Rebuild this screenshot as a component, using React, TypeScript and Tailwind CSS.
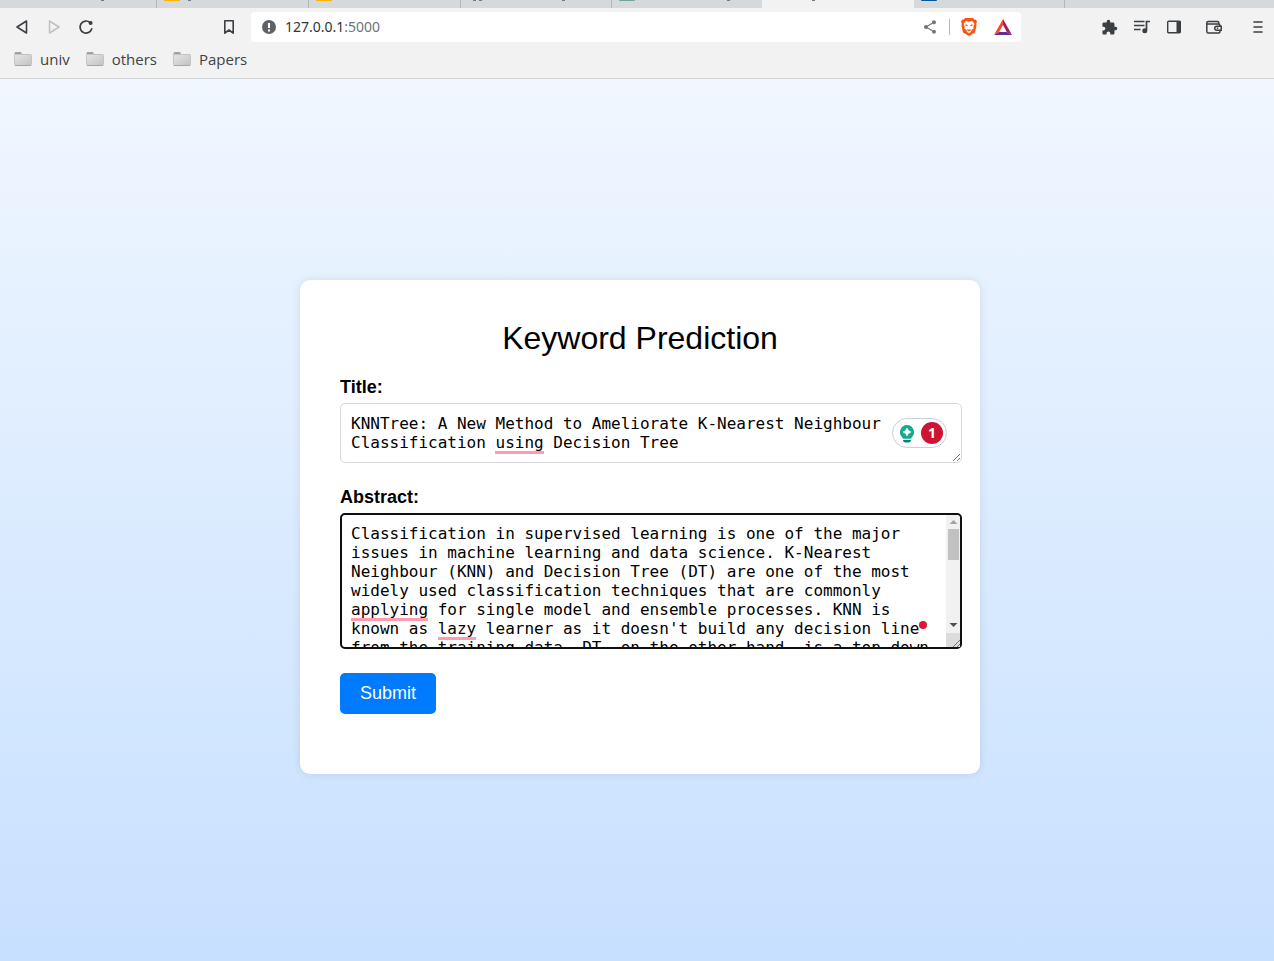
import React from "react";
import { MdShare, MdExtension } from "react-icons/md";

type Tab = { width: string; icon?: string; marks: number[] };

const tabs: Tab[] = [
  { width: "w-[157px] border-r", marks: [101] },
  { width: "w-[152px] border-r", icon: "#fbb300", marks: [31] },
  { width: "w-[152px] border-r", icon: "#fbb300", marks: [] },
  { width: "w-[151px] border-r", marks: [12, 18, 101] },
  { width: "w-[150px]", icon: "#71a697", marks: [115] },
  { width: "w-[152px] bg-[#f2f2f2]", marks: [50] },
  { width: "w-[151px] border-r", icon: "#005a96", marks: [] },
];

const abstractText =
  "Classification in supervised learning is one of the major issues in machine learning and data science. K-Nearest Neighbour (KNN) and Decision Tree (DT) are one of the most widely used classification techniques that are commonly applying for single model and ensemble processes. KNN is known as lazy learner as it doesn't build any decision line from the training data. DT, on the other hand, is a top-down approach that builds decision rules from the training data.";

function TabStrip() {
  return (
    <div className="flex h-2 bg-[#d5d9dc]" aria-hidden="true">
      {tabs.map((tab, i) => (
        <div key={i} className={`shrink-0 border-[#b4b8ba] ${tab.width}`}>
          <svg className="block h-2 w-full">
            {tab.marks.map((x) => (
              <rect key={x} x={x} y="0" width="3" height="1" fill="#77797b" />
            ))}
            {tab.icon && <rect x="7" y="-2" width="16" height="3" rx="1" fill={tab.icon} />}
          </svg>
        </div>
      ))}
    </div>
  );
}

function FolderIcon() {
  return (
    <svg width="18" height="16" viewBox="0 0 18 16" className="block">
      <defs>
        <linearGradient id="folder" x1="0" y1="0" x2="1" y2="1">
          <stop offset="0" stopColor="#e6e6e6" />
          <stop offset="1" stopColor="#c2c2c2" />
        </linearGradient>
      </defs>
      <path d="M0.5 4V2L1.5 1H7L8 3h9v2H.5z" fill="#a2a2a2" />
      <rect x="0.5" y="3.5" width="17" height="11" rx="1" fill="url(#folder)" stroke="#c4c4c4" />
      <path d="M1 14.5h16" stroke="#a6a6a6" />
    </svg>
  );
}

function Toolbar() {
  return (
    <div className="flex h-[38px] items-center text-[#3b3e42]">
      <div className="flex w-[251px] shrink-0 items-center">
        <button aria-label="Back" className="ml-3.5 flex size-4 items-center justify-center">
          <svg width="16" height="16" viewBox="0 0 16 16" fill="none" stroke="currentColor" strokeWidth="1.6" strokeLinejoin="round">
            <path d="M12.5 2v12L3 8z" />
          </svg>
        </button>
        <button aria-label="Forward" className="ml-4 flex size-4 items-center justify-center text-[#c0c2c4]">
          <svg width="16" height="16" viewBox="0 0 16 16" fill="none" stroke="currentColor" strokeWidth="1.6" strokeLinejoin="round">
            <path d="M3.5 2v12L13 8z" />
          </svg>
        </button>
        <button aria-label="Reload" className="ml-4 flex size-4 items-center justify-center">
          <svg width="16" height="16" viewBox="0 0 16 16" fill="none" stroke="currentColor" strokeWidth="1.7" strokeLinecap="round">
            <path d="M13.8 9.8A6 6 0 1 1 12 3.5" />
            <circle cx="12.6" cy="4" r="2" fill="currentColor" stroke="none" />
          </svg>
        </button>
        <button aria-label="Bookmark this page" className="ml-auto mr-3.5 flex size-4 items-center justify-center">
          <svg width="16" height="16" viewBox="0 0 16 16" fill="none" stroke="currentColor" strokeWidth="1.6" strokeLinejoin="round">
            <path d="M3.8 1.8h8.4v12.4L8 11l-4.200 3.200z" />
          </svg>
        </button>
      </div>
      <div className="flex h-[30px] w-[770px] shrink items-center rounded bg-white pl-2.5 pr-2">
        <svg width="16" height="16" viewBox="0 0 16 16" className="shrink-0">
          <circle cx="8" cy="8" r="7" fill="#5f6368" />
          <path d="M8 4v5M8 10.5v2" stroke="#fff" strokeWidth="2" />
        </svg>
        <div className="ml-2 font-['Noto_Sans',sans-serif] text-sm text-[#303336]">
          127.0.0.1<span className="text-[#707377]">:5000</span>
        </div>
        <button aria-label="Share" className="ml-auto text-[#757575]">
          <MdShare size={16} />
        </button>
        <div className="ml-[11px] h-4 w-px bg-[#b5b5b5]" />
        <button aria-label="Brave Shields" className="ml-2.5">
          <svg width="18" height="20" viewBox="0 0 18 20" className="block">
            <path d="M5 1h8l1.500 1.700 1.500-.2 1 2.500-.8 1.600.3 2L15 15.500 9 19l-6-3.500L1.500 8.600l.3-2L1 5l1-2.500 1.500.2z" fill="#fb5410" />
            <path d="M6 4l3 .7L12 4l2.500 2.700-1.200 3.300.4 1.600-2.300 1.500-.2 1.600L9 16.200l-2.200-1.500-.2-1.600-2.300-1.500.4-1.600-1.200-3.300z" fill="#fff" />
            <path d="M5.500 7.800l2 .8M12.500 7.800l-2 .8M7.300 12.600L9 13.500l1.700-.9" stroke="#fb5410" strokeWidth="1.3" fill="none" />
          </svg>
        </button>
        <button aria-label="Brave Rewards" className="ml-[15px]">
          <svg width="20" height="18" viewBox="0 0 20 18" className="block">
            <path d="M10 1L1 17l5.200-3L10 7z" fill="#ff4724" />
            <path d="M10 1l9 16-5.200-3L10 7z" fill="#9e1f63" />
            <path d="M1 17h18l-5.200-3H6.200z" fill="#662d91" />
          </svg>
        </button>
      </div>
      <div className="ml-auto flex items-center pr-2">
        <button aria-label="Extensions">
          <MdExtension size={17} />
        </button>
        <button aria-label="Media" className="ml-3.5">
          <svg width="20" height="20" viewBox="0 0 20 20" className="block">
            <path d="M2 4.500h10.500M2 8.500h10.500M2 12.500h6.500M14.500 13V4.500H18" fill="none" stroke="currentColor" strokeWidth="1.7" />
            <circle cx="12.8" cy="13.700" r="2.500" fill="currentColor" />
          </svg>
        </button>
        <button aria-label="Sidebar" className="ml-3.5">
          <svg width="16" height="16" viewBox="0 0 16 16" className="block">
            <rect x="1.700" y="2.200" width="12.600" height="11.600" rx="1" fill="none" stroke="currentColor" strokeWidth="1.4" />
            <path d="M10.500 2h4v12h-4z" fill="currentColor" />
          </svg>
        </button>
        <button aria-label="Wallet" className="ml-6">
          <svg width="16" height="16" viewBox="0 0 16 16" fill="none" stroke="currentColor" strokeWidth="1.5" className="block">
            <path d="M12.800 4.800V3.700c0-.8-.5-1.200-1.300-1.200H2.200C1.300 2.500.8 3 .8 3.800v8.600c0 1 .6 1.600 1.500 1.600h10.300c.9 0 1.400-.6 1.400-1.500V11.300M.9 5h11.300c1 0 1.800.5 1.800 1.600V7.200" />
            <path d="M15.200 7.200h-4.400a2 2 0 0 0 0 4.100h4.400zM10.800 9.200h1.400" />
          </svg>
        </button>
        <button aria-label="Menu" className="ml-7">
          <svg width="16" height="16" viewBox="0 0 16 16" className="block">
            <path d="M4 3h8M4 8h8M4 13h8" stroke="currentColor" strokeWidth="1.6" strokeLinecap="round" />
          </svg>
        </button>
      </div>
    </div>
  );
}

function Browser() {
  return (
    <header className="border-b border-[#d2d5d8] bg-[#f2f2f2]">
      <TabStrip />
      <Toolbar />
      <nav className="flex h-8 items-start gap-4 pl-3.5 font-['Open_Sans','Noto_Sans',sans-serif] text-[15px] leading-[26px] text-[#3f4245]">
        {["univ", "others", "Papers"].map((name) => (
          <a key={name} href="#" className="flex items-center gap-2">
            <FolderIcon />
            {name}
          </a>
        ))}
      </nav>
    </header>
  );
}

function GrammarBadge() {
  return (
    <div className="absolute right-[15px] top-[15px] flex h-[30px] w-[55px] items-center justify-between rounded-full border border-[#c9cddd] bg-white pl-1.5 pr-[3px]">
      <svg width="16" height="20" viewBox="0 0 16 20">
        <path d="M8 2a7.200 7.200 0 0 1 4.700 12.500L12 15.700H4l-.7-1.200A7.200 7.200 0 0 1 8 2z" fill="#15ab93" />
        <path d="M8 5l1.400 2.600L12 9l-2.600 1.400L8 13l-1.400-2.600L4 9l2.600-1.400z" fill="#fff" stroke="#fff" strokeWidth=".6" />
        <path d="M4 17h8c0 1.500-1 2.500-2.500 2.500h-3C5 19.500 4 18.500 4 17z" fill="#078571" />
      </svg>
      <span className="flex size-[22px] items-center justify-center rounded-full bg-[#ce1431] font-['Noto_Sans',sans-serif] text-sm font-bold text-white">
        1
      </span>
    </div>
  );
}

function ResizeGrip() {
  return (
    <svg width="10" height="10" viewBox="0 0 10 10" className="pointer-events-none absolute bottom-0 right-0">
      <path d="M1 8L8 1M5 8l3-3" stroke="#666" strokeWidth="0.9" />
    </svg>
  );
}

function ScrollBar() {
  return (
    <div className="absolute bottom-0.5 right-0.5 top-0.5 flex w-3.5 flex-col items-center rounded-r-sm bg-[#f1f1f1]" aria-hidden="true">
      <svg width="14" height="14" viewBox="0 0 14 14" className="shrink-0">
        <path d="M3.500 9L7.500 5l4 4z" fill="#a3a3a3" />
      </svg>
      <div className="ml-px h-[31px] w-[11px] shrink-0 bg-[#c1c1c1]" />
      <svg width="14" height="14" viewBox="0 0 14 14" className="mt-auto shrink-0">
        <path d="M3.500 4l4 4 4-4z" fill="#505050" />
      </svg>
      <div className="h-3.5 w-full shrink-0 bg-[#dcdcdc]" />
    </div>
  );
}

export default function App() {
  return (
    <div className="flex min-h-screen flex-col font-['Liberation_Sans',Arial,sans-serif] text-black">
      <Browser />
      <main className="flex grow items-center justify-center bg-linear-to-b from-[#f0f7ff] to-[#c7e0ff] pl-1.5 pt-3.5">
        <form
          className="w-full max-w-[680px] rounded-[10px] bg-white p-10 shadow-[0_0_10px_rgba(0,0,0,0.1)]"
          onSubmit={(e) => e.preventDefault()}
        >
          <h1 className="mb-5 text-center text-[32px] leading-[37px]">Keyword Prediction</h1>

          <label htmlFor="title" className="mb-[5px] block text-lg leading-[21px] font-bold">
            Title:
          </label>
          <div className="relative mb-6 w-[calc(100%+22px)]">
            <textarea
              id="title"
              rows={2}
              spellCheck={false}
              className="block w-full resize-none rounded-[5px] border border-[#d8d8d8] p-2.5 font-['DejaVu_Sans_Mono',monospace] text-base leading-[19px] outline-none [scrollbar-width:none]"
              defaultValue="KNNTree: A New Method to Ameliorate K-Nearest Neighbour Classification using Decision Tree"
            />
            <div className="pointer-events-none absolute left-[155px] top-12 h-[3px] w-[49px] bg-[#ff9bad]" />
            <GrammarBadge />
            <ResizeGrip />
          </div>

          <label htmlFor="abstract" className="mb-[5px] block text-lg leading-[21px] font-bold">
            Abstract:
          </label>
          <div className="relative mb-6 w-[calc(100%+22px)]">
            <textarea
              id="abstract"
              rows={6}
              spellCheck={false}
              className="block w-full resize-none rounded-[5px] border border-[#d8d8d8] py-2.5 pl-2.5 pr-[25px] font-['DejaVu_Sans_Mono',monospace] text-base leading-[19px] outline-2 -outline-offset-2 outline-[#101010] [scrollbar-width:none]"
              defaultValue={abstractText}
            />
            <ScrollBar />
            <div className="pointer-events-none absolute left-[11px] top-[105px] h-[3px] w-[77px] bg-[#ff9bad]" />
            <div className="pointer-events-none absolute left-[98px] top-[124px] h-[3px] w-[38px] bg-[#ff9bad]" />
            <div className="pointer-events-none absolute right-[35px] top-[108px] size-2 rounded-full bg-[#d9173a]" />
            <ResizeGrip />
          </div>

          <button type="submit" className="mb-5 block rounded-[5px] bg-[#007bff] px-5 py-2.5 text-lg leading-[21px] text-white">
            Submit
          </button>
        </form>
      </main>
    </div>
  );
}
